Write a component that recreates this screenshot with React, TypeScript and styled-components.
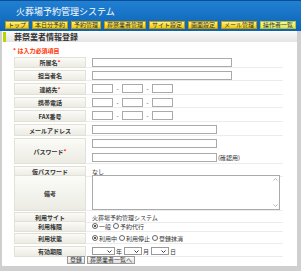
import React from 'react';
import styled, { createGlobalStyle } from 'styled-components';

const GlobalStyle = createGlobalStyle`
  html, body { margin: 0; padding: 0; }
  body {
    width: 301px; height: 271px; overflow: hidden;
    background: #cfcfcf;
    font-family: "Noto Sans CJK JP", "Noto Sans", sans-serif;
    color: #333;
  }
  * { box-sizing: border-box; }
`;

const Page = styled.div`
  width: 301px;
  height: 271px;
  display: flex;
  flex-direction: column;
  background: #cfcfcf;
`;

const Header = styled.header`
  height: 31px;
  background: linear-gradient(#2180d2, #0b63b7);
  border-top: 1px solid #0a4f98;
  display: flex;
  flex-direction: column;
`;

const Title = styled.h1`
  margin: 0;
  height: 20px;
  padding-left: 16px;
  display: flex;
  align-items: center;
  color: #fff;
  font-size: 9px;
  font-weight: normal;
`;

const Tabs = styled.nav`
  display: flex;
  gap: 3px;
  padding-left: 5px;
  height: 8px;
`;

const Tab = styled.span<{ $active?: boolean }>`
  height: 8px;
  padding: 0 2px;
  font-size: 6px;
  line-height: 6px;
  display: flex;
  align-items: center;
  color: #333;
  border: 1px solid ${p => (p.$active ? '#b8c040' : '#c49a00')};
  background: ${p =>
    p.$active ? 'linear-gradient(#f4fa9a, #dbe850)' : 'linear-gradient(#fff28a, #f3c800)'};
  white-space: nowrap;
`;

const Content = styled.main`
  flex: 1;
  margin: 0 4px 5px 2px;
  background: #fff;
  display: flex;
  flex-direction: column;
`;

const SectionTitle = styled.h2`
  margin: 1px 0 0 1px;
  height: 10px;
  border-left: 3px solid #b6d600;
  background: linear-gradient(#f8f8f8, #e4e4e4);
  padding-left: 8px;
  font-size: 8px;
  line-height: 10px;
  font-weight: bold;
  color: #333;
`;

const Required = styled.p`
  margin: 5px 0 0 11px;
  font-size: 6px;
  line-height: 7px;
  font-weight: bold;
  color: #ff3300;
`;

const Form = styled.div`
  margin: 3px 0 0 12px;
  width: 271px;
  display: flex;
  flex-direction: column;
  gap: 2px;
`;

const Row = styled.div<{ $h: number }>`
  display: grid;
  grid-template-columns: 72px 1fr;
  height: ${p => p.$h}px;
`;

const Label = styled.div`
  background: linear-gradient(#fbfbf8, #ecebe3);
  border: 1px solid #e2e1d8;
  display: flex;
  align-items: center;
  justify-content: center;
  font-size: 6px;
  font-weight: bold;
  color: #333;
  white-space: nowrap;
`;

const Req = styled.span`
  color: #ff2a00;
`;

const Value = styled.div<{ $col?: boolean }>`
  padding-left: 6px;
  display: flex;
  flex-direction: ${p => (p.$col ? 'column' : 'row')};
  justify-content: ${p => (p.$col ? 'center' : 'flex-start')};
  align-items: ${p => (p.$col ? 'flex-start' : 'center')};
  gap: ${p => (p.$col ? '5px' : '0')};
  border-bottom: 1px solid #ececec;
  margin-right: 2px;
  font-size: 6px;
  color: #333;
  white-space: nowrap;
`;

const TextInput = styled.input<{ $w: number }>`
  width: ${p => p.$w}px;
  height: 9px;
  border: 1px solid #aaa;
  padding: 0;
  margin: 0;
  background: #fff;
`;

const Dash = styled.span`
  width: 9px;
  text-align: center;
  font-size: 6px;
`;

const InlineGroup = styled.div`
  display: flex;
  align-items: center;
  gap: 1px;
`;

const MemoBox = styled.div`
  width: 188px;
  height: 35px;
  border: 1px solid #aaa;
  display: flex;
  background: #fff;
`;

const Memo = styled.textarea`
  flex: 1;
  height: 100%;
  border: none;
  padding: 0;
  margin: 0;
  resize: none;
  outline: none;
`;

const ScrollTrack = styled.div`
  width: 8px;
  display: flex;
  flex-direction: column;
  justify-content: space-between;
  align-items: center;
  padding: 2px 0;
`;

const Arrow = ({ up }: { up?: boolean }) => (
  <svg width="5" height="3" viewBox="0 0 5 3">
    <path d={up ? 'M0.5 2.5 L2.5 0.5 L4.5 2.5' : 'M0.5 0.5 L2.5 2.5 L4.5 0.5'} stroke="#a8a8a8" strokeWidth="0.8" fill="none" />
  </svg>
);

const RadioItem = styled.label`
  display: flex;
  align-items: center;
  gap: 1px;
  margin-right: 2px;
  font-size: 6px;
`;

const RadioDot = styled.span<{ $on?: boolean }>`
  width: 6px;
  height: 6px;
  border-radius: 50%;
  border: 1px solid #666;
  background: #fff;
  display: flex;
  align-items: center;
  justify-content: center;
  &::after {
    content: '';
    width: 2px;
    height: 2px;
    border-radius: 50%;
    background: ${p => (p.$on ? '#222' : 'transparent')};
  }
`;

const SelectBox = styled.div<{ $w: number }>`
  width: ${p => p.$w}px;
  height: 8px;
  border: 1px solid #999;
  background: #fff;
  display: flex;
  align-items: center;
  justify-content: flex-end;
  padding-right: 2px;
`;

const Unit = styled.span`
  font-size: 6px;
  margin: 0 2px 0 1px;
`;

const Buttons = styled.div`
  display: flex;
  gap: 2px;
  margin: 2px 0 0 65px;
`;

const Button = styled.button`
  height: 8px;
  padding: 0 2px;
  font-family: inherit;
  font-size: 6px;
  line-height: 6px;
  color: #333;
  border: 1px solid #999;
  background: linear-gradient(#fdfdfd, #dedede);
  display: flex;
  align-items: center;
`;

const Chevron = () => (
  <svg width="5" height="3" viewBox="0 0 5 3">
    <path d="M0.5 0.5 L2.5 2.5 L4.5 0.5" stroke="#223" strokeWidth="0.9" fill="none" />
  </svg>
);

const Radio = ({ on, children }: { on?: boolean; children: React.ReactNode }) => (
  <RadioItem>
    <RadioDot $on={on} />
    {children}
  </RadioItem>
);

const tabs = ['トップ', '本日分予約', '予約管理', '葬祭業者管理', 'サイト設定', '画面設定', 'メール管理', '操作者一覧'];

const TelInputs = () => (
  <>
    <TextInput $w={21} /><Dash>-</Dash><TextInput $w={21} /><Dash>-</Dash><TextInput $w={21} />
  </>
);

export default function App() {
  return (
    <Page>
      <GlobalStyle />
      <Header>
        <Title>火葬場予約管理システム</Title>
        <Tabs>
          {tabs.map((t, i) => (
            <Tab key={t} $active={i === tabs.length - 1}>{t}</Tab>
          ))}
        </Tabs>
      </Header>
      <Content>
        <SectionTitle>葬祭業者情報登録</SectionTitle>
        <Required>* は入力必須項目</Required>
        <Form>
          <Row $h={11}>
            <Label>所属名<Req>*</Req></Label>
            <Value><TextInput $w={140} /></Value>
          </Row>
          <Row $h={11}>
            <Label>担当者名</Label>
            <Value><TextInput $w={140} /></Value>
          </Row>
          <Row $h={12}>
            <Label>連絡先<Req>*</Req></Label>
            <Value><TelInputs /></Value>
          </Row>
          <Row $h={11}>
            <Label>携帯電話</Label>
            <Value><TelInputs /></Value>
          </Row>
          <Row $h={12}>
            <Label>FAX番号</Label>
            <Value><TelInputs /></Value>
          </Row>
          <Row $h={12}>
            <Label>メールアドレス</Label>
            <Value><TextInput $w={125} /></Value>
          </Row>
          <Row $h={26}>
            <Label>パスワード<Req>*</Req></Label>
            <Value $col>
              <TextInput $w={125} />
              <InlineGroup><TextInput $w={125} />(確認用)</InlineGroup>
            </Value>
          </Row>
          <Row $h={7}>
            <Label>仮パスワード</Label>
            <Value>なし</Value>
          </Row>
          <Row $h={35}>
            <Label>備考</Label>
            <Value>
              <MemoBox>
                <Memo />
                <ScrollTrack><Arrow up /><Arrow /></ScrollTrack>
              </MemoBox>
            </Value>
          </Row>
          <Row $h={7}>
            <Label>利用サイト</Label>
            <Value>火葬場予約管理システム</Value>
          </Row>
          <Row $h={10}>
            <Label>利用権限</Label>
            <Value>
              <Radio on>一般</Radio>
              <Radio>予約代行</Radio>
            </Value>
          </Row>
          <Row $h={11}>
            <Label>利用状態</Label>
            <Value>
              <Radio on>利用中</Radio>
              <Radio>利用停止</Radio>
              <Radio>登録抹消</Radio>
            </Value>
          </Row>
          <Row $h={8}>
            <Label>有効期限</Label>
            <Value>
              <SelectBox $w={23}><Chevron /></SelectBox><Unit>年</Unit>
              <SelectBox $w={18}><Chevron /></SelectBox><Unit>月</Unit>
              <SelectBox $w={18}><Chevron /></SelectBox><Unit>日</Unit>
            </Value>
          </Row>
        </Form>
        <Buttons>
          <Button>登録</Button>
          <Button>葬祭業者一覧へ</Button>
        </Buttons>
      </Content>
    </Page>
  );
}
